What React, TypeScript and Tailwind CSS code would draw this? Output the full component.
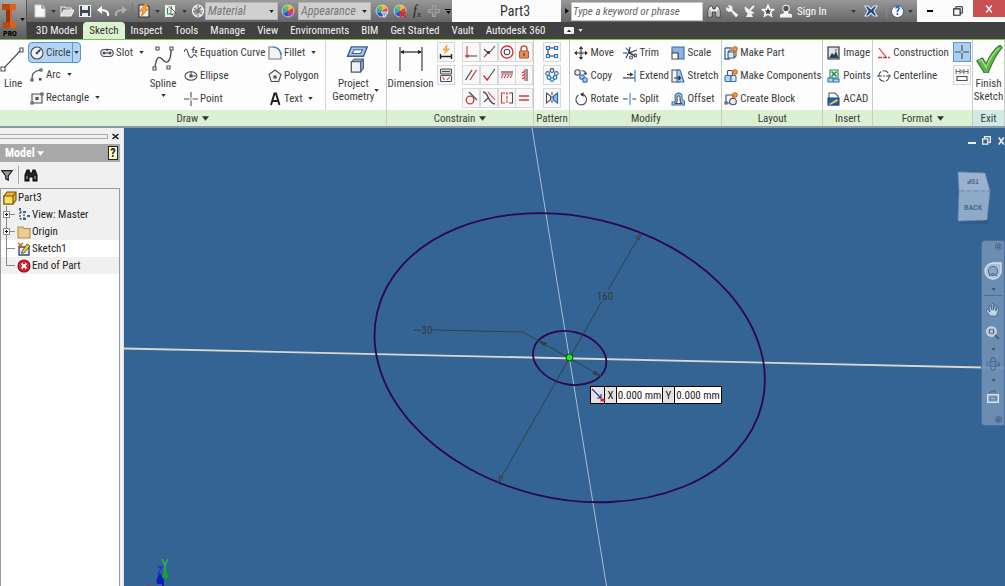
import type { ReactNode } from "react";

// Small filled triangle used by every drop-down in the ribbon
function Caret({ className = "text-[#333]", big = false }: { className?: string; big?: boolean }) {
  return (
    <svg className={`shrink-0 ${className}`} width={big ? 7 : 5} height={big ? 5 : 3} viewBox="0 0 6 4">
      <path d="M0 0h6L3 4z" fill="currentColor" />
    </svg>
  );
}

function Svg({ size = 14, box = 14, children }: { size?: number; box?: number; children: ReactNode }) {
  return (
    <svg
      className="shrink-0"
      width={size}
      height={size}
      viewBox={`0 0 ${box} ${box}`}
      fill="none"
      stroke="#4a4f57"
      strokeWidth="1.1"
      aria-hidden="true"
    >
      {children}
    </svg>
  );
}

const RED = "#d23b3b";
const BLUE = "#2f6fb8";

const icons: Record<string, ReactNode> = {
  // draw
  circle: <><circle cx="7" cy="7" r="6" fill="#eef5fb" /><path d="M7 7l3-3" /><path d="M11 3L7.500 4.300l2.200 2.200z" fill="#4a4f57" stroke="none" /><circle cx="7" cy="7" r=".9" fill="#4a4f57" /></>,
  arc: <><path d="M2 12C1.500 6 5 2.500 10.500 2" /><path d="M1 11h2v2H1zM10 1h2v2h-2z" fill="#fff" /><path d="M9.500 10.500h1.500v1.500H9.500z" fill="#4a4f57" /></>,
  rectangle: <><path d="M2 3h10v9H2z" fill="#f0f0f0" /><path d="M1 11h2v2H1zM11 2h2v2h-2z" fill="#fff" /><path d="M6 6.500h2v2H6z" fill="#4a4f57" /></>,
  slot: <><rect x=".8" y="3.500" width="12.400" height="7" rx="3.500" fill="#eee" /><path d="M4 7h6" /><path d="M3 6h2v2H3zM9 6h2v2H9zM6.300 3h1.500v1.500H6.300z" fill="#4a4f57" strokeWidth=".6" /></>,
  equation: <><path d="M0 6c2-5 3-3 4 1s3 6 5 3c1-2 2-2 4 1" /><path d="M11 1c-2 0-2 1-2 3v3M7.500 3.500h3M11 4l2 3M13 4l-2 3" /></>,
  ellipse: <><ellipse cx="7" cy="7" rx="6" ry="4.300" /><path d="M7 2v5h5" /><path d="M6 6h2v2H6z" fill="#4a4f57" /></>,
  point: <path d="M7 0v5.500M7 8.500V14M0 7h5.500M8.500 7H14M7 6.500v1" />,
  fillet: <><path d="M1 13V1h4c5 0 8 4 8 8v4z" fill="#f4f4f4" stroke="#777" /><path d="M5 1c5 0 8 4 8 8" stroke="#3a8ad6" strokeWidth="1.600" /></>,
  polygon: <><path d="M7 1l6 4.500-2.300 7H3.300L1 5.500z" fill="#f2f2f2" /><path d="M6 7h2v2H6z" fill="#4a4f57" /></>,
  text: <path d="M3 13L6.500 1.500h1.500L11.500 13M4.500 9h5" stroke="#222" strokeWidth="2" />,
  // modify
  move: <><path d="M7 1v4M7 9v4M1 7h4M9 7h4M6 6h2v2H6z" stroke="#333" /><path d="M7 0l2.200 3H4.800zM7 14l2.200-3H4.800zM0 7l3-2.200v4.400zM14 7l-3-2.200v4.400z" fill="#333" stroke="none" /></>,
  copy: <><circle cx="3.500" cy="3.500" r="2.700" fill="#e8eef5" /><circle cx="8" cy="8" r="2.300" fill="#a9cbee" stroke={BLUE} /><circle cx="11" cy="11" r="2.300" fill="#a9cbee" stroke={BLUE} /><path d="M7.500 2c3-1 4 1 4 3M10 4l1.500 1.500L13 4" /></>,
  rotate: <><path d="M4.500 3A5.300 5.300 0 1 0 8.500 2.400" /><path d="M9.500 0L6 2.400l3.500 2.300z" fill="#333" stroke="none" /></>,
  trim: <><path d="M0 7h4M3 2l7 7" stroke="#3a8ad6" strokeWidth="1.600" /><path d="M7 1c0 3-1 5-4 11M6 7l8-3M6 7l6 3" stroke="#333" /><circle cx="8" cy="11.500" r="1.500" /><circle cx="12.300" cy="9.500" r="1.400" /></>,
  extend: <><path d="M0 9h12" stroke="#333" /><path d="M4 5.500h4" stroke="#333" /><path d="M7 3.500l3.500 2L7 7.500z" fill="#333" stroke="none" /><path d="M12 1v12" stroke="#3a8ad6" strokeWidth="1.300" /></>,
  split: <><path d="M0 7h4.500M9.500 7H13" stroke="#333" /><path d="M7 1v12" stroke="#3a8ad6" /></>,
  scale: <><path d="M1 1h12v12H7V7H1z" fill="#8fb4df" stroke={BLUE} /><path d="M1 7h6v6H1z" fill="#fff" /></>,
  stretch: <><path d="M1 1h7v12H1z" fill="#f3f3f3" /><path d="M6 1h3l4 12H6z" fill="#a7c9ec" stroke={BLUE} /><path d="M3 9h6M7.500 7l2 2-2 2" stroke="#222" /></>,
  offset: <><path d="M1 13v-3h2c2 0 1-3 1-5 0-5 7-5 7-1 0 3 0 5 2.500 5v4z" fill="#a9c9ea" stroke={BLUE} /><path d="M3.500 11.500c3 0 3-3 2.500-5.500 0-3 3.500-3 3 0 0 3 0 5 2.500 5.500z" fill="#fff" /></>,
  // layout
  makePart: <><path d="M1 2h7M1 2v11h5" stroke={BLUE} strokeWidth="1.400" /><path d="M4 6l2-2h6v6l-2 2H4z" fill="#dbe9f7" /><path d="M4 6h6v6M10 6l2-2" /><circle cx="11" cy="3" r="2.200" fill="#f39a3d" stroke="#d86a1a" /></>,
  makeComponents: <><rect x="3.500" y="1.500" width="5" height="5" rx="1" fill="#eef5fc" /><rect x="1" y="6.500" width="6" height="6" rx="1" fill="#b8d6f2" stroke={BLUE} /><rect x="7" y="6.500" width="5" height="6" rx="1" fill="#d6e8f8" stroke={BLUE} /><circle cx="11" cy="3" r="2.200" fill="#f39a3d" stroke="#d86a1a" /></>,
  createBlock: <><path d="M2 3h7v8H2z" fill="#f3f3f3" /><circle cx="9" cy="9.500" r="3.300" fill="#e8eef5" /><path d="M1 10h2v2H1z" fill="#fff" /><circle cx="11" cy="3" r="2.200" fill="#f39a3d" stroke="#d86a1a" /></>,
  // insert
  image: <><path d="M1 1h11v12H1z" fill="#d9e6f5" stroke="#222" /><path d="M2 12l3-5 2 2 2-4 2.500 7z" fill="#27415f" stroke="none" /><circle cx="9" cy="4" r="1.300" fill="#e88d3a" stroke="none" /></>,
  points: <><path d="M3 1h8v8H3z" fill="#fff" stroke="#1d8a46" /><path d="M4.500 2.500l5 5M9.500 2.500l-5 5" stroke="#1d8a46" strokeWidth="1.600" /><path d="M1 9h5v4H1zM6 10h6v3H6z" fill="#b5d2f0" stroke={BLUE} /></>,
  acad: <><path d="M2 1h6l3 3v9H2z" fill="#fff" stroke="#555" /><path d="M1 6h11v7H1z" fill="#1f5fae" stroke="#1a4b8a" /><path d="M2 12l8-5 1 2-8 4z" fill="#f4cf36" stroke="none" /></>,
  // format
  construction: <><path d="M2 2l7 9" stroke={RED} strokeWidth="1.200" /><path d="M1 11.500h12" stroke={RED} strokeWidth="1.300" strokeDasharray="4 1" /></>,
  centerline: <><circle cx="7" cy="7" r="5.200" strokeDasharray="6 1.500" /><path d="M0 7h5M6 7h2M9 7h5" /></>,
  // constraints
  coincident: <><path d="M3 1v8" stroke={RED} /><path d="M4 11h9" /><path d="M2 10h2v2H2z" fill={RED} stroke={RED} /></>,
  collinear: <><path d="M2 12l4-4" stroke={RED} /><path d="M8 7l5-6M2 4l4 4" /><path d="M5.500 6.500h2v2h-2z" fill="#333" /></>,
  concentric: <><circle cx="7" cy="7" r="6" stroke={RED} strokeWidth="1.400" /><circle cx="7" cy="7" r="2.800" /></>,
  fix: <><path d="M4 6V4a3 3 0 0 1 6 0v2" stroke="#b5623a" strokeWidth="1.500" /><rect x="2.500" y="6" width="9" height="7" rx="1" fill="#e58c58" stroke="#b5552c" /><path d="M7 8v3" stroke="#742f12" /></>,
  parallel: <><path d="M1.500 12L8 2" strokeWidth="1.300" /><path d="M6 12l6.500-10" stroke={RED} strokeWidth="1.300" /></>,
  perpendicular: <><path d="M5 12l8-11" /><path d="M1.500 7.500L5 12l2-2.500" stroke={RED} strokeWidth="1.400" /></>,
  horizontal: <><path d="M1 4h12" strokeWidth="1.200" /><path d="M1 6h12M3 7L1 10M6 7l-2 3M9 7l-2 3M12 7l-2 3" stroke={RED} /></>,
  vertical: <><path d="M10 1v12" strokeWidth="1.200" /><path d="M8 1v12M8 3L5 5M8 6L5 8M8 9l-3 2" stroke={RED} /></>,
  tangent: <><circle cx="6" cy="9" r="3.800" stroke={RED} strokeWidth="1.300" /><path d="M5 1l8 8" strokeWidth="1.300" /></>,
  smooth: <><path d="M1 1c6 0 4 11 12 12" strokeWidth="1.300" /><path d="M6 1l7 8" stroke={RED} /><path d="M2 11l4-4" /></>,
  symmetric: <><path d="M5 2H1.500v10H5" stroke={RED} /><path d="M9 2h3.500v10H9" /><path d="M7 1v12" stroke={RED} strokeDasharray="3 1" /></>,
  equal: <path d="M2 5h10M2 9h10" stroke={RED} strokeWidth="1.300" />,
  autoDimension: <><path d="M8 0L4 5h3L5.500 8.500 10.500 4H7.500z" fill="#f8c33a" stroke="#d78a1a" strokeWidth=".6" /><path d="M1.500 9v5M12.500 9v5M2 11.500h10" stroke="#222" strokeWidth="1.400" /></>,
  showConstraints: <><rect x="1.500" y="1" width="11" height="5" rx="1" fill="#ddd" /><path d="M3 3.500h8" /><rect x="1.500" y="7.500" width="11" height="6" rx="1" fill="#fff" /><path d="M3.500 9l2 3M8 12l2.500-3" stroke={RED} /></>,
  // patterns
  rectPattern: <><path d="M4 3h6M3 5v5M4 11h6" stroke="#333" /><path d="M1.500 1.500h3v3h-3zM9.500 1.500h3v3h-3zM1.500 9.500h3v3h-3zM9.500 9.500h3v3h-3z" fill="#cfe3f8" stroke={BLUE} /></>,
  circPattern: <g fill="#e2effb" stroke={BLUE}><circle cx="7" cy="2.500" r="1.900" stroke="#4a4f57" /><circle cx="11.300" cy="5.500" r="1.900" /><circle cx="10" cy="9.500" r="1.900" /><circle cx="7" cy="11.600" r="1.800" /><circle cx="4" cy="9.500" r="1.900" /><circle cx="2.700" cy="5.500" r="1.900" /></g>,
  mirror: <><path d="M1.500 2v10l4-3V5z" fill="#fff" /><path d="M12.500 2v10l-4-3V5z" fill="#8fbfee" stroke={BLUE} strokeWidth="1.300" /><path d="M7 1v12" strokeDasharray="3 1" /></>,
  centerPoint: <path d="M7 0v6M7 8v6M0 7h6M8 7h6" />,
  driven: <><path d="M1 1v5M5 1v5M9 1v5M13 1v5M1 3.500h4M9 3.500h4M5.500 2l3 3M8.500 2l-3 3" strokeWidth=".8" /><path d="M2 8.500h10v4H2z" fill="#f8f8f8" /></>,
};

function Tool({ icon, label, caret = false }: { icon: string; label: string; caret?: boolean }) {
  return (
    <button className="flex h-[23px] items-center gap-[2px] whitespace-nowrap">
      <Svg>{icons[icon]}</Svg>
      {label}
      {caret && <Caret className="ml-1 text-[#333]" />}
    </button>
  );
}

function IconButton({ icon, label, active = false }: { icon: string; label: string; active?: boolean }) {
  return (
    <button
      aria-label={label}
      className={`flex h-5 w-[18px] shrink-0 items-center justify-center border ${active ? "border-[#5c95cc] bg-[#a9cff3]" : "border-[#d6d8dc] bg-[#f8f8f9]"}`}
    >
      <Svg>{icons[icon]}</Svg>
    </button>
  );
}

function Panel({ title, grow, caret = false, exit = false, children }: { title: string; grow: string; caret?: boolean; exit?: boolean; children: ReactNode }) {
  return (
    <section className={`flex min-w-0 basis-0 flex-col border-r border-[#c9ccc9] ${grow}`}>
      <div className="flex flex-1 pt-px">{children}</div>
      <h2 className={`flex h-4 items-center justify-center gap-1 ${exit ? "bg-[#cfeae4]" : "bg-[#dcf0d2]"}`}>
        {title}
        {caret && <Caret big />}
      </h2>
    </section>
  );
}

const tabs = ["3D Model", "Sketch", "Inspect", "Tools", "Manage", "View", "Environments", "BIM", "Get Started", "Vault", "Autodesk 360"];

const constraints = ["coincident", "collinear", "concentric", "fix", "parallel", "perpendicular", "horizontal", "vertical", "tangent", "smooth", "symmetric", "equal"];

function ColorWheel() {
  return (
    <>
      <path d="M7 7V1a6 6 0 0 1 5.200 3z" fill="#f2b632" stroke="none" />
      <path d="M7 7l5.200-3a6 6 0 0 1 0 6z" fill="#e8452e" stroke="none" />
      <path d="M7 7l5.200 3A6 6 0 0 1 7 13z" fill="#b03bc0" stroke="none" />
      <path d="M7 7v6a6 6 0 0 1-5.200-3z" fill="#3450c8" stroke="none" />
      <path d="M7 7l-5.200 3a6 6 0 0 1 0-6z" fill="#2fa7c8" stroke="none" />
      <path d="M7 7L1.800 4A6 6 0 0 1 7 1z" fill="#6cc04a" stroke="none" />
      <circle cx="7" cy="7" r="6" stroke="#ddd" strokeWidth=".8" />
    </>
  );
}

function QuickButton({ label, children }: { label: string; children: ReactNode }) {
  return (
    <button aria-label={label} className="flex shrink-0 items-center">
      <Svg>{children}</Svg>
    </button>
  );
}

function StyleSelect({ label }: { label: string }) {
  return (
    <div className="relative flex h-[18px] w-[73px] shrink-0 items-center">
      <select aria-label={label} className="h-full w-full appearance-none border border-[#b5b5b5] bg-[#cfcfcf] pl-[2px] text-xs italic text-[#777]">
        <option>{label}</option>
      </select>
      <Caret className="pointer-events-none absolute right-1 text-[#222]" />
    </div>
  );
}

function TitleBar() {
  return (
    <div className="flex h-[22px] bg-linear-to-b from-[#989898] to-[#666]">
      <div className="flex min-w-0 basis-0 grow-[419] items-center gap-1 pl-[6px]">
        <QuickButton label="New"><path d="M2 1h7l3 3v9H2z" fill="#f6f6f6" stroke="#ccc" /><path d="M9 1v3h3" stroke="#777" /></QuickButton>
        <Caret />
        <QuickButton label="Open"><path d="M1 12V3h4l1 1h5v2" fill="#777" stroke="#eee" /><path d="M1 12l3-6h10l-3 6z" fill="#ddd" stroke="#eee" /></QuickButton>
        <QuickButton label="Save"><path d="M1.500 1.500h11v11h-11z" fill="#41454d" stroke="#eee" /><path d="M4 2h6v4H4zM4 9h6v3H4z" fill="#e8edf3" stroke="none" /></QuickButton>
        <QuickButton label="Undo"><path d="M12 12c1-4-2-6-7-6" stroke="#fff" strokeWidth="2" /><path d="M6 2v8L1 6z" fill="#fff" stroke="none" /></QuickButton>
        <QuickButton label="Redo"><path d="M2 12c-1-4 2-6 7-6" stroke="#b0b0b0" strokeWidth="2" /><path d="M8 2v8l5-4z" fill="#b0b0b0" stroke="none" /></QuickButton>
        <span className="h-4 border-l border-[#777]" />
        <QuickButton label="Update"><path d="M2 1h8l2 2v10H2z" fill="#eee" stroke="#333" /><path d="M8 0L3 7h3l-2 6 7-8H8l3-5z" fill="#f7a823" stroke="#d2691e" strokeWidth=".7" /></QuickButton>
        <Caret />
        <QuickButton label="Select"><path d="M1.500 1.500h9v11h-9z" fill="#eaf3ea" stroke="#eee" /><path d="M3.500 4v6h4V3h-3" stroke="#2e8b57" /><path d="M7 4l5 5-2.300.3 1.300 3-1.500.5-1.200-3L7 11z" fill="#fff" stroke="#333" strokeWidth=".7" /></QuickButton>
        <Caret />
        <QuickButton label="Material browser"><ellipse cx="7" cy="7" rx="5.500" ry="6" fill="#ddd" stroke="#f4f4f4" /><path d="M3 4l8 6M3 9l7-6M7 1v12M2 7h10M4 11l6-8" stroke="#777" /></QuickButton>
        <div className="-ml-1"><StyleSelect label="Material" /></div>
        <div className="-mx-px"><QuickButton label="Appearance browser"><ColorWheel /></QuickButton></div>
        <StyleSelect label="Appearance" />
        <QuickButton label="Adjust appearance"><ColorWheel /><path d="M6 8h7l-2.500 3v2h-2v-2z" fill="#5db7ee" stroke="#fff" strokeWidth=".7" /></QuickButton>
        <QuickButton label="Clear appearance"><ColorWheel /><path d="M7 8l6 5M13 8l-6 5" stroke="#d22c25" strokeWidth="1.800" /></QuickButton>
        <button className="w-3 whitespace-nowrap font-['Liberation_Serif',serif] text-sm italic leading-none text-[#222]" aria-label="Parameters">f<sub className="text-[9px]">x</sub></button>
        <QuickButton label="Add"><path d="M5.500 1.500h3v4h4v3h-4v4h-3v-4h-4v-3h4z" fill="#888" stroke="#aaa" strokeWidth=".8" /></QuickButton>
        <button aria-label="Customize" className="flex flex-col items-center gap-px">
          <span className="w-[6px] border-t border-black" />
          <Caret className="text-black" />
        </button>
      </div>
      <h1 className="flex min-w-0 basis-0 grow-[61] items-center bg-[#fbfbfb] pl-12 text-sm text-[#333]">Part3</h1>
      <div className="flex min-w-0 basis-0 grow-[356] items-center">
        <svg width="7" height="8" className="ml-[3px] shrink-0" viewBox="0 0 5 8"><path d="M0 1v6l4-3z" fill="#111" /></svg>
        <input
          aria-label="Search help"
          placeholder="Type a keyword or phrase"
          className="h-[19px] w-[132px] border border-[#c4c4c4] bg-white px-px text-[11px] italic placeholder:text-[#666]"
        />
        <div className="ml-1 flex flex-1 items-center gap-1 text-white">
          <QuickButton label="Search"><path d="M1 13V6l2-4h2l1 3h2l1-3h2l2 4v7H9V8H5v5z" fill="#f2f2f2" stroke="#333" strokeWidth=".8" /><path d="M3 6v6M11 6v6" stroke="#888" /></QuickButton>
          <QuickButton label="Subscription"><path d="M3.500 1.500l1 2-1 1.500-2-1.500c-1 3 2 5 4.500 3.500l5 6 2-2-6-5c1-3-1-5-3.500-4.500z" fill="#f4f4f4" stroke="#f4f4f4" strokeWidth=".6" /></QuickButton>
          <QuickButton label="Exchange"><path d="M2 3c0 6 4 8 9 6z" fill="#f2f2f2" stroke="#f2f2f2" strokeWidth=".7" /><path d="M7 6l4-4" stroke="#f2f2f2" strokeWidth="2" /><path d="M5 9l-2 4h7L8 9z" fill="#f2f2f2" stroke="none" /></QuickButton>
          <QuickButton label="Favorites"><path d="M7 1l1.800 4 4.200.4-3.200 2.800 1 4.300L7 10.300l-3.800 2.200 1-4.300L1 5.400 5.200 5z" fill="#eee" stroke="#fff" /><path d="M7 4l1 2.400 2.400.2-1.800 1.600.5 2.400L7 9.300l-2 1.300.5-2.400-1.800-1.600L6 6.400z" fill="#444" stroke="none" /></QuickButton>
          <button className="flex items-center gap-1 whitespace-nowrap">
            <Svg><circle cx="7" cy="4.500" r="3.200" fill="#555" stroke="#f2f2f2" /><path d="M5.500 7.500v2L1.500 11v2h11v-2l-4-1.500v-2" fill="#f2f2f2" stroke="#f2f2f2" /></Svg>
            Sign In
          </button>
          <span className="ml-auto"><Caret /></span>
          <span className="ml-1 flex"><QuickButton label="Exchange apps"><path d="M1 2h3l3 3 3-3h3l-3 5 3 5h-3L7 9l-3 3H1l3-5z" fill="#26448c" stroke="#e1e6f2" /></QuickButton></span>
          <span className="ml-1 h-4 border-l border-[#888]" />
          <button aria-label="Help" className="flex size-[13px] items-center justify-center rounded-full border border-[#3c5d96] bg-white text-xs font-bold text-[#2c5aa0]">?</button>
          <Caret className="mr-1 text-[#333]" />
        </div>
      </div>
      <div className="flex min-w-0 basis-0 grow-[56] items-center justify-around bg-[#fbfbfb]">
        <button aria-label="Minimize" className="w-[6px] border-b-2 border-black" />
        <button aria-label="Restore"><Svg size={10}><path d="M4 4V1h9v9h-3" stroke="#222" strokeWidth="1.400" /><path d="M1 4h9v9H1z" stroke="#222" strokeWidth="1.600" /></Svg></button>
      </div>
      <div className="min-w-0 basis-0 grow-[32] bg-[#fbfbfb]">
        <button aria-label="Close" className="flex h-[17px] w-full items-center justify-center bg-[#c75050]">
          <Svg size={8}><path d="M2 1l10 12M12 1L2 13" stroke="#fff" strokeWidth="2.500" /></Svg>
        </button>
      </div>
    </div>
  );
}

function Ribbon() {
  return (
    <div className="flex h-[89px] border-t border-[#7dc24b] border-b-2 border-b-[#8a9aa8] bg-[#fdfdfd] text-[#3c3c3c]">
      <Panel title="Draw" grow="grow-[386]" caret>
        <button className="flex w-[26px] flex-col items-center gap-1 pt-1">
          <Svg size={28} box={28}><path d="M5 23L22 5" /><path d="M2 22h4v4H2zM21 3h3v4h-3z" fill="#fff" /></Svg>
          Line
        </button>
        <div className="flex w-[74px] flex-col items-start pl-1">
          <div className="-ml-[2px] mt-px flex h-[21px] items-center rounded-sm border border-[#5c95cc] bg-[#b3d5f5]">
            <button className="flex h-full items-center gap-[2px] px-px"><Svg>{icons.circle}</Svg>Circle</button>
            <button aria-label="Circle options" className="flex h-full w-2 items-center justify-center border-l border-[#5c95cc]"><Caret /></button>
          </div>
          <Tool icon="arc" label="Arc" caret />
          <Tool icon="rectangle" label="Rectangle" caret />
        </div>
        <div className="w-12"><Tool icon="slot" label="Slot" caret /></div>
        <button className="flex w-[30px] flex-col items-center gap-1 pt-1">
          <Svg size={28} box={28}><path d="M6 23C7 12 10 10 14 15s8 1 8-10" strokeWidth="1.400" /><path d="M4 22h3v3H4zM7 2h3v3H7zM21 2h3v3h-3zM18 21h3v3h-3z" fill="#fff" /></Svg>
          Spline
          <Caret />
        </button>
        <div className="flex w-[84px] flex-col items-start pl-[6px]">
          <Tool icon="equation" label="Equation Curve" />
          <Tool icon="ellipse" label="Ellipse" />
          <Tool icon="point" label="Point" />
        </div>
        <div className="flex w-16 flex-col items-start border-r border-[#d5d5d5] pl-[6px]">
          <Tool icon="fillet" label="Fillet" caret />
          <Tool icon="polygon" label="Polygon" />
          <Tool icon="text" label="Text" caret />
        </div>
        <button className="flex flex-1 flex-col items-center gap-1 pt-1">
          <Svg size={28} box={30}>
            <path d="M10 2h17l-4 10H6z" fill="#a9c9ea" stroke="#3a5f96" strokeWidth="1.500" /><path d="M13 5h9l-2 4h-9z" fill="#fff" stroke="#3a5f96" />
            <path d="M10 18l3-3h10v10l-3 4H10z" fill="#7fa8d6" stroke="#55606e" /><path d="M10 18h10v11H10z" fill="#edf3fa" /><path d="M20 18l3-3" />
          </Svg>
          <span className="flex items-center"><span>Project<br />Geometry</span><Caret className="text-[#333]" /></span>
        </button>
      </Panel>
      <Panel title="Constrain" grow="grow-[147]" caret>
        <button className="flex w-12 flex-col items-center gap-1 pt-1">
          <Svg size={28} box={28}><path d="M3 2v24M25 2v24M4 7h20" strokeWidth="1.300" /><path d="M3 7l4-2v4zM25 7l-4-2v4z" fill="#222" stroke="none" /></Svg>
          Dimension
        </button>
        <div className="flex flex-col gap-[3px] pl-[2px] pt-px">
          <IconButton icon="autoDimension" label="Automatic dimensions" />
          <IconButton icon="showConstraints" label="Show constraints" />
        </div>
        <div className="ml-[7px] grid grid-cols-4 content-start gap-y-[3px] pt-px">
          {constraints.map((name) => (
            <IconButton key={name} icon={name} label={name} />
          ))}
        </div>
      </Panel>
      <Panel title="Pattern" grow="grow-[35]">
        <div className="mx-auto flex flex-col gap-[3px] pt-px">
          <IconButton icon="rectPattern" label="Rectangular pattern" />
          <IconButton icon="circPattern" label="Circular pattern" />
          <IconButton icon="mirror" label="Mirror" />
        </div>
      </Panel>
      <Panel title="Modify" grow="grow-[151]">
        <div className="flex w-[53px] flex-col items-start pl-1">
          <Tool icon="move" label="Move" />
          <Tool icon="copy" label="Copy" />
          <Tool icon="rotate" label="Rotate" />
        </div>
        <div className="flex w-12 flex-col items-start">
          <Tool icon="trim" label="Trim" />
          <Tool icon="extend" label="Extend" />
          <Tool icon="split" label="Split" />
        </div>
        <div className="flex flex-col items-start">
          <Tool icon="scale" label="Scale" />
          <Tool icon="stretch" label="Stretch" />
          <Tool icon="offset" label="Offset" />
        </div>
      </Panel>
      <Panel title="Layout" grow="grow-[100]">
        <div className="flex flex-col items-start pl-[2px]">
          <Tool icon="makePart" label="Make Part" />
          <Tool icon="makeComponents" label="Make Components" />
          <Tool icon="createBlock" label="Create Block" />
        </div>
      </Panel>
      <Panel title="Insert" grow="grow-[49]">
        <div className="flex flex-col items-start pl-1">
          <Tool icon="image" label="Image" />
          <Tool icon="points" label="Points" />
          <Tool icon="acad" label="ACAD" />
        </div>
      </Panel>
      <Panel title="Format" grow="grow-[99]" caret>
        <div className="flex flex-1 flex-col items-start pl-1">
          <Tool icon="construction" label="Construction" />
          <Tool icon="centerline" label="Centerline" />
        </div>
        <div className="flex flex-col gap-[3px] pr-px pt-px">
          <IconButton icon="centerPoint" label="Center point" active />
          <IconButton icon="driven" label="Driven dimension" />
        </div>
      </Panel>
      <Panel title="Exit" grow="grow-[31]" exit>
        <button className="flex flex-1 flex-col items-center gap-1 pt-1">
          <Svg size={28} box={30}><path d="M2 17l6-3 4 6C15 13 19 5 27 0l2 3C22 10 18 20 14 30h-4z" fill="#5db548" stroke="#2f7a2b" strokeWidth="1.200" /><path d="M4 17l3-1 5 8C16 14 20 8 26 3" stroke="#a4dc8e" strokeWidth="1.500" /></Svg>
          <span>Finish<br />Sketch</span>
        </button>
      </Panel>
    </div>
  );
}

function TreeRow({ icon, label, expand = false, root = false, last = false, selected = false }: { icon: ReactNode; label: string; expand?: boolean; root?: boolean; last?: boolean; selected?: boolean }) {
  return (
    <li className={`flex h-[17px] items-center gap-px ${selected ? "bg-white" : "bg-[#f0f0f0]"}`}>
      {!root && (
        <svg width="15" height="17" viewBox="0 0 15 17" fill="none" stroke="#888">
          <path d={last ? "M5.500 0v8.500H14" : "M5.500 0v17M5.500 8.500H14"} />
          {expand && <><path d="M2.500 5.500h6v6h-6z" fill="#fff" /><path d="M4 8.500h3M5.500 7v3" stroke="#111" /></>}
        </svg>
      )}
      <span className={root ? "pl-[2px]" : ""}><Svg>{icon}</Svg></span>
      {label}
    </li>
  );
}

function ModelBrowser() {
  return (
    <aside className="flex w-[124px] shrink-0 flex-col border-r border-[#dfe5ea] bg-[#f0f0f0] text-[#222]">
      <div className="flex h-4 items-center gap-1 pr-1">
        <span className="h-[5px] flex-1 border-y border-r border-[#aaa]" />
        <button aria-label="Close browser"><Svg size={7}><path d="M1 2l12 10M13 2L1 12" stroke="#111" strokeWidth="2.800" /></Svg></button>
      </div>
      <div className="mr-[3px] flex h-[18px] items-center justify-between bg-[#a8a8a8] pl-[5px] pr-[2px]">
        <button className="flex items-center gap-[2px] text-xs font-bold text-white">Model <Caret big className="text-white" /></button>
        <button aria-label="Browser help" className="flex h-[14px] w-[10px] items-center justify-center border border-[#222] bg-[#ffffcf] text-xs font-bold leading-none">?</button>
      </div>
      <div className="flex h-[26px] items-center gap-[5px] pl-px">
        <button aria-label="Filter"><Svg size={12}><path d="M1 2h12L8.500 8v5l-3-1.500V8z" fill="#999" stroke="#222" strokeWidth="1.400" /></Svg></button>
        <span className="h-[18px] border-l border-[#aaa]" />
        <button aria-label="Find"><Svg size={14}><path d="M1 13V7l2-5h2l1 3h2l1-3h2l2 5v6H9V9H5v4z" fill="#222" stroke="#111" /><path d="M3 8v3M11 8v3" stroke="#aaa" /></Svg></button>
      </div>
      <ul className="mr-[3px] flex-1 border-x border-t border-[#999] bg-white">
        <TreeRow root label="Part3" icon={<><path d="M1 5l3-4h9v8l-3 4H1z" fill="#f0b429" stroke="#755512" /><path d="M1 5h9v8H1z" fill="#fbe06a" stroke="#755512" /><path d="M10 5l3-4" stroke="#755512" /></>} />
        <TreeRow expand label="View: Master" icon={<><path d="M3 1v10M3 4h3M3 11h3M7 6v6" stroke="#333" strokeDasharray="2 1" /><path d="M2 1h2M6 4h3M6 11h3M10 8h3" stroke="#2d66a8" strokeWidth="2" /></>} />
        <TreeRow expand label="Origin" icon={<path d="M1 3.500V2h5l1 1.500h6V13H1z" fill="#e9cd93" stroke="#b18b45" />} />
        <TreeRow selected label="Sketch1" icon={<><path d="M2 5h10v8H2z" fill="#e8eef5" stroke="#334e78" strokeWidth="1.400" /><path d="M4 11l6-9 3 2-6 7z" fill="#f3c83f" stroke="#513d14" strokeWidth=".8" /><path d="M1 1l5 4M6 1L1 5" stroke="#d2601f" strokeWidth="1.500" /></>} />
        <TreeRow last label="End of Part" icon={<><circle cx="7" cy="7" r="6" fill="#d92630" stroke="#8b1017" /><path d="M4.500 4.500l5 5M9.500 4.500l-5 5" stroke="#fff" strokeWidth="1.800" /></>} />
      </ul>
    </aside>
  );
}

function NavBar() {
  return (
    <nav className="absolute right-0 top-28 flex w-6 flex-col items-center rounded-l border border-[#4b6e98] bg-[#7191b5]/90 py-[2px] text-[#48648a]">
      <button aria-label="Close navigation bar" className="self-end pr-[2px]"><Svg size={7}><circle cx="7" cy="7" r="6" stroke="#3d5678" strokeWidth="1.500" /><path d="M4 4l6 6M10 4l-6 6" stroke="#3d5678" strokeWidth="2" /></Svg></button>
      <button aria-label="Steering wheel" className="mt-3"><Svg size={18} box={18}><path d="M9 1h8v8a8 8 0 1 1-8-8z" fill="#a9bfd8" stroke="#d6e1ee" strokeWidth="1.300" /><circle cx="9" cy="9" r="4.500" fill="#8ca8c8" stroke="#4d6b91" /><path d="M5 14c2-3 6-3 8 0" stroke="#4d6b91" /></Svg></button>
      <Caret className="mt-2 text-[#3f5b82]" />
      <span className="mt-1 w-[18px] border-t border-[#4b6e98]" />
      <button aria-label="Pan" className="mt-[6px]"><Svg size={16} box={16}><path d="M5 14l-4-6 1-1 3 3-1-6 1.300-.5L7 8V1.500h1.500V8l1.300-5.500 1.300.5L10.500 9l2-3 1.200.7L11.500 14z" fill="#c2d2e4" stroke="#47638a" strokeWidth=".8" /></Svg></button>
      <button aria-label="Zoom" className="mt-2"><Svg size={14}><circle cx="5.500" cy="5.500" r="4.800" fill="#a7bed8" stroke="#dce6f1" /><path d="M9 9l4 4" stroke="#47638a" strokeWidth="2" /><path d="M3.500 4h4v3h-4z" stroke="#47638a" fill="#dce6f1" /></Svg></button>
      <Caret className="mt-2 text-[#3f5b82]" />
      <button aria-label="Orbit" className="mt-[6px]"><Svg size={14}><ellipse cx="7" cy="7" rx="2.500" ry="6.300" stroke="#506e95" /><ellipse cx="7" cy="7" rx="6.300" ry="2.500" stroke="#506e95" /><path d="M11 7l2 2 1-3M5 2l2-2 2 2" stroke="#506e95" /></Svg></button>
      <Caret className="mt-2 text-[#3f5b82]" />
      <button aria-label="Look at" className="mt-2"><Svg size={14}><path d="M1.500 4.500h11v8h-11z" fill="#9eb7d2" stroke="#d5e0ed" strokeWidth="1.200" /><path d="M4 7h6v3H4z" stroke="#4d6b91" /><path d="M3 3l5-2.500 2 2" stroke="#4d6b91" /></Svg></button>
      <button aria-label="Navigation bar options" className="mt-3 self-end pr-[2px]"><Svg size={7}><circle cx="7" cy="7" r="6" stroke="#3d5678" strokeWidth="1.500" /><path d="M3 4h8M4 7h6l-3 4z" fill="#3d5678" stroke="#3d5678" /></Svg></button>
    </nav>
  );
}

function Viewport() {
  return (
    <main className="relative min-w-0 flex-1 overflow-hidden bg-[#346494]">
      <svg className="block h-full w-full" viewBox="124 128 881 458" preserveAspectRatio="xMidYMid slice" fill="none">
        {/* sketch axes */}
        <path d="M124 348.500L1005 368" stroke="#d9d8d4" strokeWidth="1.800" />
        <path d="M532 128l74.500 458" stroke="#a8bdd4" />
        {/* circles seen in perspective */}
        <g stroke="#2d0650" strokeWidth="1.800">
          <ellipse cx="569.700" cy="357.700" rx="197.800" ry="140.900" transform="rotate(13.400 569.700 357.700)" />
          <ellipse cx="569.700" cy="358" rx="37.200" ry="26.300" transform="rotate(13.400 569.700 358)" />
        </g>
        {/* diameter dimensions */}
        <g stroke="#2f4348">
          <path d="M641 233l-33 57M602 301L498 483" />
          <path d="M433 330l90 2 78 44M414 330h7" />
          <path d="M641 233l-1.900 7-3.200-1.800zM498 483l5-5.200-3.100-1.800z" fill="#4b5a58" />
          <path d="M538.500 341l8 2-2 3zM601 376l-8-2 2-3z" fill="#2f4348" />
        </g>
        <g fill="#2b3d42" className="text-[11px]">
          <text x="605" y="300" textAnchor="middle">160</text>
          <text x="427" y="334" textAnchor="middle">30</text>
        </g>
        <circle cx="569.500" cy="357.500" r="3.500" fill="#19f019" stroke="#0a3d14" />
        {/* view cube */}
        <g stroke="#6f89a8" strokeWidth=".8">
          <path d="M957 220l4 4h26l3-4z" fill="#2a5280" stroke="none" opacity=".5" />
          <path d="M958 172l27 1 5 18h-31z" fill="#9ab2cf" strokeDasharray="5 2" />
          <path d="M959 191h31l-3 29-29 1z" fill="#8eaac9" strokeDasharray="5 2" />
        </g>
        <g fill="#536b89" className="font-bold">
          <text x="973" y="210" textAnchor="middle" className="text-[8px]">BACK</text>
          <text x="973" y="181" textAnchor="middle" transform="rotate(180 973 180)" className="text-[7px]">TOP</text>
        </g>
        {/* axis triad */}
        <path d="M165 576v-12M165 565l-3-6M165 565l3-6" stroke="#22c03c" strokeWidth="1.500" />
        <path d="M158 567h4l-4 7h4" stroke="#1a2fd0" strokeWidth="1.300" />
        <path d="M160 574c4 3 5 8 3 10h-6c-1-3 0-8 3-10z" fill="#0d1eb4" />
        <path d="M165 569l4 7c0 3-5 4-7 1z" fill="#0fa62b" />
        <path d="M163 580v6" stroke="#0d1eb4" strokeWidth="2" />
        <path d="M146 585.500h5" stroke="#9b2d3e" />
      </svg>
      <div className="absolute right-0 top-2 flex items-center gap-[6px]">
        <button aria-label="Minimize document" className="mt-1 w-2 border-b-2 border-[#f0ece4]" />
        <button aria-label="Restore document"><Svg size={9}><path d="M4 4V1h9v9h-3M1 4.500h8v8H1z" stroke="#f0ece4" strokeWidth="2" /></Svg></button>
        <button aria-label="Close document"><Svg size={8}><path d="M3 1l9 12M12 1L3 13" stroke="#f0ece4" strokeWidth="2.800" /></Svg></button>
      </div>
      <NavBar />
      {/* coordinate entry next to the cursor */}
      <div className="absolute left-[466px] top-[258px] flex h-[18px] divide-x divide-black border border-black bg-[#e3e3e3] text-[#222]">
        <span className="flex w-[14px] items-center justify-center"><Svg><path d="M1 1l9 9M10 6v4H6" stroke="#2b2b9c" /><path d="M10 11h3v2h-3z" fill="#e22" stroke="#e22" /></Svg></span>
        <label htmlFor="coord-x" className="flex w-3 items-center justify-center">X</label>
        <input id="coord-x" defaultValue="0.000 mm" className="w-[46px] bg-white text-center" />
        <label htmlFor="coord-y" className="flex w-3 items-center justify-center">Y</label>
        <input id="coord-y" defaultValue="0.000 mm" className="w-[46px] bg-white text-center" />
      </div>
    </main>
  );
}

export default function App() {
  return (
    <div className="flex h-screen flex-col overflow-hidden font-['Roboto_Condensed','Liberation_Sans',sans-serif] text-[11px] leading-[13px]">
      <header>
        <div className="flex bg-[#414141]">
          <div className="flex min-w-0 flex-1 flex-col-reverse">
            <div className="flex h-[17px] items-center">
              <span className="w-[30px] shrink-0" />
              {tabs.map((tab) => (
                <button
                  key={tab}
                  className={`h-full whitespace-nowrap px-[6px] leading-none ${tab === "Sketch" ? "rounded-t-sm bg-[#dcf3d0] text-[#333]" : "text-[#f2f2f2]"}`}
                >
                  {tab}
                </button>
              ))}
              <button aria-label="Minimize ribbon" className="ml-3 flex items-center gap-1">
                <svg width="10" height="7" viewBox="0 0 10 7"><rect width="10" height="7" rx="1" fill="#f2f2f2" /><path d="M3 5h4L5 2.500z" fill="#222" /></svg>
                <Caret className="text-[#ddd]" />
              </button>
            </div>
            <div className="flex">
              <button aria-label="Application menu" className="-mb-[17px] flex h-[39px] w-[27px] shrink-0 items-center border-r border-[#555] bg-linear-to-b from-[#aaa] to-[#5c5c5c]">
                <span className="flex flex-col items-center">
                  <svg width="20" height="27" viewBox="0 0 20 27"><path d="M2 2h14v6h-4v12h4v6H3v-6h3V8H2z" fill="#d9631e" /><path d="M6 8h4v12H6z" fill="#93370e" /><path d="M2 2h8v6H2zM3 20h7v6H3z" fill="#b54a15" /></svg>
                  <span className="text-[8px] font-bold leading-[9px] text-black">PRO</span>
                </span>
                <Caret className="text-black" />
              </button>
              <div className="min-w-0 flex-1"><TitleBar /></div>
            </div>
          </div>
        </div>
        <Ribbon />
      </header>
      <div className="flex min-h-0 flex-1">
        <ModelBrowser />
        <Viewport />
      </div>
    </div>
  );
}
